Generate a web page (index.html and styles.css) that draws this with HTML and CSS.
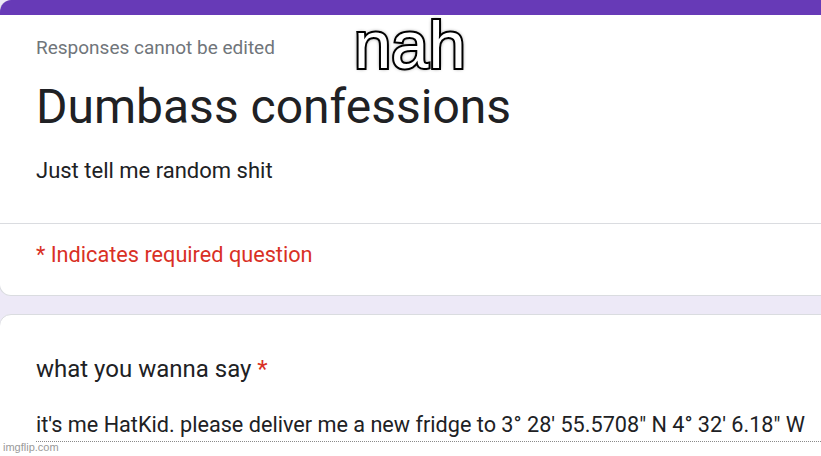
FILE: index.html
```html
<!DOCTYPE html>
<html>
<head>
<meta charset="utf-8">
<link rel="stylesheet" href="styles.css">
</head>
<body>
<div class="page">
  <div class="card card-head">
    <div class="accent"></div>
    <div class="head-body">
      <div class="notice">Responses cannot be edited</div>
      <h1 class="title">Dumbass confessions</h1>
      <p class="desc">Just tell me random shit</p>
    </div>
    <div class="required">* Indicates required question</div>
  </div>
  <div class="card card-question">
    <div class="question">what you wanna say <span class="star">*</span></div>
    <div class="answer">it's me HatKid. please deliver me a new fridge to 3° 28' 55.5708" N 4° 32' 6.18" W</div>
  </div>
</div>
<div class="meme">nah</div>
<div class="watermark">imgflip.com</div>
</body>
</html>
```
FILE: styles.css
```css
html, body {
  margin: 0;
  padding: 0;
  width: 821px;
  height: 456px;
  overflow: hidden;
  background: #ede9f7;
  font-family: Roboto, "Liberation Sans", sans-serif;
}
.page {
  width: 860px;
  display: flex;
  flex-direction: column;
  gap: 18px;
}
.card {
  background: #ffffff;
  border: 1px solid #dadce0;
  border-radius: 12px;
  overflow: hidden;
  margin-left: -1px;
}
.card-head {
  border-top: none;
}
.accent {
  height: 15px;
  background: #673ab7;
}
.head-body {
  padding: 20px 36px 0 36px;
  border-bottom: 1px solid #dadce0;
  height: 209px;
  box-sizing: border-box;
}
.notice {
  font-size: 19px;
  line-height: 26px;
  color: #70757a;
}
.title {
  margin: 18px 0 0 0;
  font-size: 48px;
  line-height: 56px;
  font-weight: 400;
  color: #202124;
}
.desc {
  margin: 22px 0 0 0;
  font-size: 22px;
  line-height: 28px;
  color: #202124;
}
.required {
  padding: 17px 36px 0 36px;
  height: 71px;
  box-sizing: border-box;
  font-size: 21.7px;
  line-height: 28px;
  color: #d93025;
}
.card-question {
  height: 160px;
  padding: 38px 36px 0 36px;
  box-sizing: border-box;
}
.question {
  font-size: 24px;
  line-height: 32px;
  color: #202124;
}
.star {
  color: #d93025;
}
.answer {
  margin-top: 26px;
  font-size: 21.65px;
  line-height: 28px;
  color: #202124;
  border-bottom: 1px dotted #8a8a8a;
  padding-bottom: 2px;
  white-space: nowrap;
}
.meme {
  position: absolute;
  left: 354px;
  top: 5px;
  font-family: "Liberation Sans", Arial, sans-serif;
  font-size: 67px;
  line-height: 80px;
  color: #ffffff;
  -webkit-text-stroke: 4px #000000;
  paint-order: stroke fill;
  text-shadow: 0 0 4px #000000, 0 0 2px #000000;
}
.watermark {
  position: absolute;
  left: 3px;
  top: 440px;
  font-family: "Liberation Sans", Arial, sans-serif;
  font-size: 11px;
  line-height: 14px;
  color: #9a9a9a;
}
```
